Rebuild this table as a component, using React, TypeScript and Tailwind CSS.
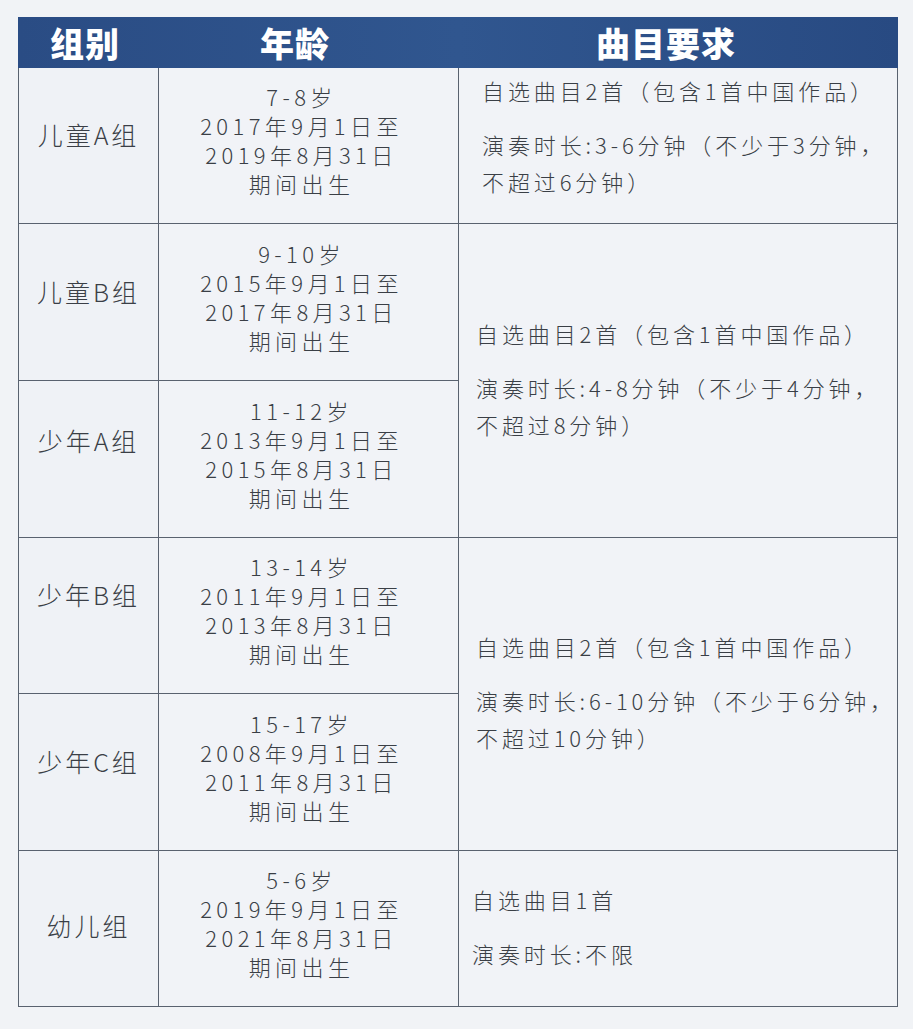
import React from "react";

const font = { fontFamily: '"Noto Sans CJK SC", "Noto Sans", sans-serif' };

type AgeRow = { group: string; age: string; from: string; to: string; lift: string };

// lift: the group label sits a little above the cell centre in the original
const rows: AgeRow[] = [
  { group: "儿童A组", age: "7-8岁", from: "2017年9月1日至", to: "2019年8月31日", lift: "pb-[22px]" },
  { group: "儿童B组", age: "9-10岁", from: "2015年9月1日至", to: "2017年8月31日", lift: "pb-[20px]" },
  { group: "少年A组", age: "11-12岁", from: "2013年9月1日至", to: "2015年8月31日", lift: "pb-[36px]" },
  { group: "少年B组", age: "13-14岁", from: "2011年9月1日至", to: "2013年8月31日", lift: "pb-[42px]" },
  { group: "少年C组", age: "15-17岁", from: "2008年9月1日至", to: "2011年8月31日", lift: "pb-[20px]" },
  { group: "幼儿组", age: "5-6岁", from: "2019年9月1日至", to: "2021年8月31日", lift: "pb-[6px]" },
];

// which grid rows the requirement cells cover
const reqs = [
  { rows: "row-start-1 row-span-1", pad: "pl-[23px] pb-[20px]", lines: ["自选曲目2首（包含1首中国作品）", "演奏时长:3-6分钟（不少于3分钟，", "不超过6分钟）"] },
  { rows: "row-start-2 row-span-2", pad: "pl-[17px] pb-[4px]", lines: ["自选曲目2首（包含1首中国作品）", "演奏时长:4-8分钟（不少于4分钟，", "不超过8分钟）"] },
  { rows: "row-start-4 row-span-2", pad: "pl-[17px] pb-[4px]", lines: ["自选曲目2首（包含1首中国作品）", "演奏时长:6-10分钟（不少于6分钟，", "不超过10分钟）"] },
  { rows: "row-start-6 row-span-1", pad: "pl-[13px] pb-[4px]", lines: ["自选曲目1首", "演奏时长:不限"] },
];

export default function App() {
  return (
    <div className="min-h-[1029px] w-[913px] bg-[#f1f3f6] pt-[17px] pl-[18px]" style={font}>
      <div className="w-[880px]">
        {/* header */}
        <div className="grid h-[51px] grid-cols-[140px_300px_1fr] items-center bg-gradient-to-r from-[#2a4c84] via-[#30568f] to-[#284a82] text-[34px] leading-none font-black text-white">
          <div className="pr-[6px] text-center tracking-[1px]">组别</div>
          <div className="pr-[26px] text-center tracking-[1px]">年龄</div>
          <div className="pr-[24px] text-center tracking-[1px]">曲目要求</div>
        </div>

        {/* body */}
        <div className="grid grid-cols-[139px_299px_438px] grid-rows-[155px_156px_156px_155px_156px_155px] gap-px bg-[#59626f] p-px pt-0 font-light text-[22px] text-[#3a3f46]">
          {rows.map((r, i) => (
            <React.Fragment key={r.group}>
              <div
                className={`col-start-1 flex items-center justify-center bg-[#eff2f6] ${r.lift} text-[25px] tracking-[3px]`}
                style={{ gridRowStart: i + 1 }}
              >
                {r.group}
              </div>
              <div
                className="col-start-2 flex flex-col items-center justify-center bg-[#f1f3f7] pr-[14px] pb-[11px] leading-[29px] tracking-[4.4px]"
                style={{ gridRowStart: i + 1 }}
              >
                <span>{r.age}</span>
                <span>{r.from}</span>
                <span>{r.to}</span>
                <span>期间出生</span>
              </div>
            </React.Fragment>
          ))}
          {reqs.map((q, i) => (
            <div
              key={i}
              className={`col-start-3 ${q.rows} flex flex-col justify-center overflow-hidden whitespace-nowrap bg-[#f1f3f7] ${q.pad} tracking-[3.9px]`}
            >
              <p className="mb-[17px] leading-[37px]">{q.lines[0]}</p>
              <p className="leading-[37px]">
                {q.lines.slice(1).map((l) => (
                  <span key={l} className="block">
                    {l}
                  </span>
                ))}
              </p>
            </div>
          ))}
        </div>
      </div>
    </div>
  );
}
